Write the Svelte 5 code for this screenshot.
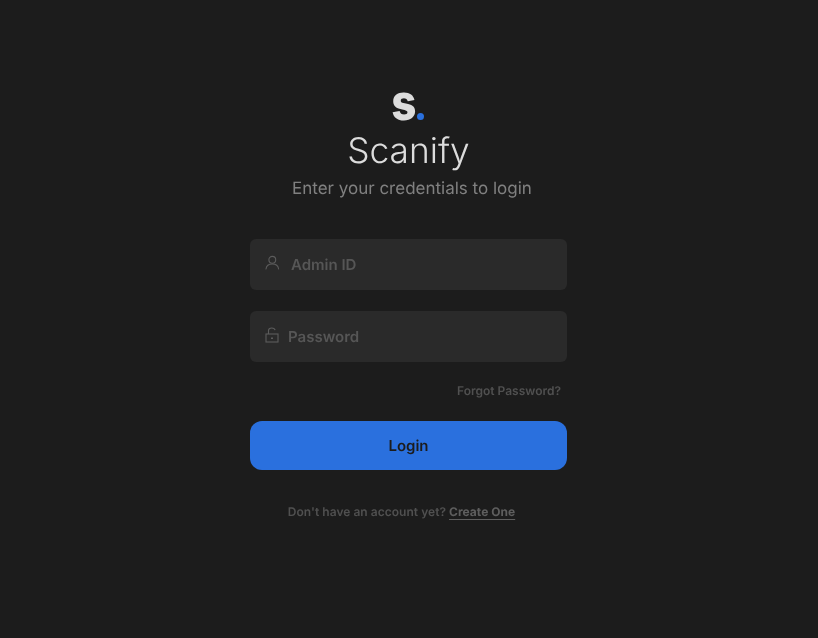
<script>
  let adminId = $state('');
  let password = $state('');
</script>

<main class="page">
  <div class="brand">
    <div class="logo"><span class="logo-s">s</span><span class="logo-dot"></span></div>
    <h1>Scanify</h1>
    <p class="sub">Enter your credentials to login</p>
  </div>
  <form class="form" onsubmit={(e) => e.preventDefault()}>
    <label class="field admin">
      <svg class="icon" width="16" height="16" viewBox="0 0 16 16" fill="none" stroke="currentColor" stroke-width="1.1" aria-hidden="true">
        <circle cx="8.300" cy="4.800" r="3.400" />
        <path d="M2 14c.4-3.300 3-5 6.300-5s5.900 1.700 6.300 5" stroke-linecap="round" />
      </svg>
      <input placeholder="Admin ID" bind:value={adminId} />
    </label>
    <label class="field pass">
      <svg class="icon" width="14" height="16" viewBox="0 0 14 16" fill="none" stroke="currentColor" stroke-width="1.1" aria-hidden="true">
        <rect x="1" y="7" width="12" height="8" />
        <path d="M3.500 7V3.500C3.500 1.900 4.800 1 6.800 1c1.700 0 3 .8 3.300 2.200" />
        <rect x="6" y="10.500" width="2" height="1.500" fill="currentColor" stroke="none" />
      </svg>
      <input type="password" placeholder="Password" bind:value={password} />
    </label>
    <div class="forgot"><a href="#forgot">Forgot Password?</a></div>
    <button type="submit">Login</button>
    <p class="signup">Don't have an account yet? <a href="#create">Create One</a></p>
  </form>
</main>

<style>
  :global(body) {
    margin: 0;
    background: #1c1c1c;
  }
  .page {
    height: 638px;
    box-sizing: border-box;
    padding-top: 91px;
    padding-right: 1px;
    display: flex;
    flex-direction: column;
    align-items: center;
    background: #1c1c1c;
    font-family: Inter, "Liberation Sans", sans-serif;
    text-rendering: geometricPrecision;
  }
  .brand {
    display: flex;
    flex-direction: column;
    align-items: center;
    will-change: transform;
  }
  .logo {
    height: 30px;
    display: flex;
    align-items: flex-end;
    padding-right: 2px;
  }
  .logo-s {
    font-size: 44px;
    font-weight: 800;
    line-height: 30px;
    height: 30px;
    color: #dcdcdc;
    transform: translateY(-2px) scaleY(1.13);
    transform-origin: 50% 100%;
  }
  .logo-dot {
    width: 7px;
    height: 7px;
    border-radius: 50%;
    background: #2a70de;
    margin-bottom: 1px;
  }
  h1 {
    margin: 10px 0 0;
    font-size: 35.3px;
    line-height: 40px;
    font-weight: 300;
    color: #dcdcdc;
  }
  .sub {
    margin: 7px 0 0 7px;
    font-size: 17px;
    line-height: 22px;
    font-weight: 400;
    color: #808080;
  }
  .form {
    width: 317px;
    margin-top: 39px;
    display: flex;
    flex-direction: column;
    will-change: transform;
  }
  .field {
    height: 51px;
    border-radius: 6px;
    background: #2a2a2a;
    display: flex;
    align-items: center;
    padding-left: 14px;
    box-sizing: border-box;
    color: #5c5c5c;
  }
  .pass {
    margin-top: 21px;
  }
  .icon {
    flex: none;
    margin-top: -4px;
  }
  .admin .icon {
    margin-right: 11px;
  }
  .pass .icon {
    margin-left: 1px;
    margin-right: 9px;
  }
  input {
    flex: 1;
    min-width: 0;
    border: 0;
    outline: 0;
    padding: 0;
    background: transparent;
    font: 600 15px Inter, "Liberation Sans", sans-serif;
    text-rendering: geometricPrecision;
    color: #cfcfcf;
  }
  input::placeholder {
    color: #565656;
    opacity: 1;
  }
  .forgot {
    margin-top: 21px;
    padding-right: 6px;
    text-align: right;
    font-size: 12px;
    line-height: 16px;
    font-weight: 600;
  }
  .forgot a {
    color: #505050;
    text-decoration: none;
  }
  button {
    margin-top: 22px;
    height: 49px;
    border: 0;
    border-radius: 12px;
    background: #2a70de;
    color: #1c1c1c;
    font: 600 15px Inter, "Liberation Sans", sans-serif;
    text-rendering: geometricPrecision;
  }
  .signup {
    margin: 34px 0 0;
    padding-right: 14px;
    text-align: center;
    font-size: 12px;
    line-height: 16px;
    font-weight: 600;
    letter-spacing: 0.03px;
    color: #505050;
  }
  .signup a {
    color: #5e5e5e;
    font-weight: 700;
    text-decoration: underline;
    text-underline-offset: 3px;
  }
</style>
